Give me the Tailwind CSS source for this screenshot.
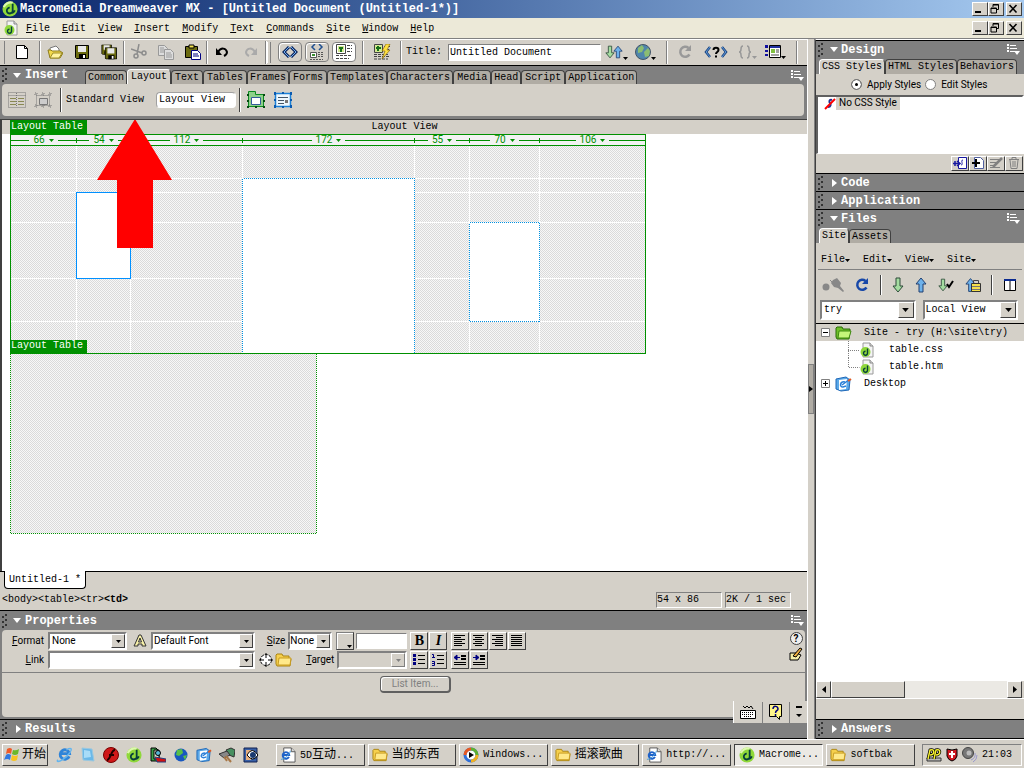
<!DOCTYPE html>
<html lang="en">
<head>
  <meta charset="UTF-8" />
  <meta name="viewport" content="width=device-width, initial-scale=1" />
  <title>Macromedia Dreamweaver MX</title>
  <script src="https://cdn.jsdelivr.net/npm/@tailwindcss/browser@4"></script>
</head>
<body class="h-screen overflow-hidden flex flex-col bg-[#d4d0c8] text-black text-[10px] leading-3 font-['Liberation_Mono','Noto_Sans_CJK_SC',monospace]">

  <!-- shared icons -->
  <svg class="hidden">
    <defs>
      <symbol id="grip" viewBox="0 0 6 14"><path fill="#333" d="M3 0h2v2H3zM0 2h2v2H0zM3 5h2v2H3zM0 7h2v2H0zM3 10h2v2H3zM0 12h2v2H0z"/></symbol>
      <symbol id="down" viewBox="0 0 8 5"><path fill="#fff" d="M0 0h8L4 5z"/></symbol>
      <symbol id="right" viewBox="0 0 5 8"><path fill="#fff" d="M0 0v8l5-4z"/></symbol>
      <symbol id="opts" viewBox="0 0 13 11"><path fill="#fff" d="M0 0h2v2H0zM0 3h2v2H0zM0 6h2v2H0zM3 1h6v1H3zM3 4h7v1H3zM3 7h5v1H3zM7 7h6l-3 4z"/></symbol>
      <symbol id="tri" viewBox="0 0 5 3"><path fill="currentColor" d="M0 0h5L2.500 3z"/></symbol>
      <symbol id="dw" viewBox="0 0 18 18"><circle cx="9" cy="9" r="8.500" fill="#8fd83a"/><path d="M2 7a8 8 0 0 1 10-5" stroke="#dcf8ae" stroke-width="2.500" fill="none"/><path d="M12 3v7.500a3.300 3.300 0 1 1-3.300-3M8.500 13.500c3 .5 5-1 6-3" stroke="#063f3b" stroke-width="2" fill="none"/></symbol>
      <symbol id="dwfile" viewBox="0 0 14 16"><path d="M3 1h7l3 3v11H3z" fill="#f4f4f4" stroke="#9a9a9a"/><path d="M10 1v3h3" fill="#ddd" stroke="#888"/><circle cx="5.500" cy="10" r="5" fill="#8fd83a"/><path d="M7.500 6.500v4.500a2 2 0 1 1-2-1.800" stroke="#063f3b" stroke-width="1.400" fill="none"/></symbol>
      <symbol id="folder" viewBox="0 0 17 14"><path d="M1 2l1-1h5l1 2h6v3h2l-1 7H2L1 11z" fill="#f6d04d" stroke="#a98312"/><path d="M3 12l1-7h12l-1 7z" fill="#ffe98a" stroke="#c89b20"/></symbol>
      <symbol id="gfolder" viewBox="0 0 17 14"><path d="M1 2l1-1h5l1 2h7v3l-1 7H2L1 11z" fill="#6fc02a" stroke="#2b6b08"/><path d="M3 12l1-7h12l-2 7z" fill="#c4f57a" stroke="#3f8a10"/></symbol>
      <symbol id="ie" viewBox="0 0 18 18"><path d="M14 11a5 5 0 1 1 .3-3H5.500" fill="none" stroke="#2f84d8" stroke-width="3"/><path d="M2 14.500C0 17 3 17 7 14.500 12 11 17 5 16 3c-1-1-3 0-5 1" fill="none" stroke="#64b5ee" stroke-width="1.500"/></symbol>
      <symbol id="iefile" viewBox="0 0 17 17"><path d="M4 1h8l4 4v11H4z" fill="#fff" stroke="#555"/><path d="M12 1v4h4" fill="#ddd" stroke="#555"/><path d="M9.500 10.500a3.500 3.500 0 1 1 .3-2H3.500" fill="none" stroke="#1f62c8" stroke-width="2"/><path d="M1 13c2 1 10-5 10-9" fill="none" stroke="#3e9be0"/></symbol>
      <symbol id="desk" viewBox="0 0 17 16"><path d="M1 3l10-2 4 3-1 10-8 1-5-2z" fill="#5aa8e8" stroke="#1f68b8"/><path d="M4 4l8-1-1 10-7 1z" fill="#fff"/><path d="M10 6c-5-1-6 5-2 5l3-1M7 9l8-6" fill="none" stroke="#2a7fd8" stroke-width="1.500"/><path d="M13 5l3-2" stroke="#e05820" stroke-width="2"/></symbol>
      <symbol id="adown" viewBox="0 0 12 16"><path d="M4 1h4v8h3l-5 6-5-6h3z" fill="#a4dca0" stroke="#2c4a38"/></symbol>
      <symbol id="aup" viewBox="0 0 12 16"><path d="M4 15h4V7h3L6 1 1 7h3z" fill="#6db1ea" stroke="#203f70"/></symbol>
      <symbol id="refresh" viewBox="0 0 14 14"><path d="M11.500 9.500A5 5 0 1 1 10.500 3" fill="none" stroke="currentColor" stroke-width="2.500"/><path d="M13 0v6H7z" fill="currentColor"/></symbol>
      <symbol id="min" viewBox="0 0 12 10"><path fill="#000" d="M2 7h6v2H2z"/></symbol>
      <symbol id="rest" viewBox="0 0 12 10"><path d="M4 3V.500h5.500v5H8M4 1h5.500M2 4h5.500v5H2zM2 4.500h5.500" fill="none" stroke="#000"/></symbol>
      <symbol id="close" viewBox="0 0 12 10"><path d="M2.500 1l7 7.500M9.500 1l-7 7.500" stroke="#000" stroke-width="1.600"/></symbol>
      <symbol id="floppy" viewBox="0 0 14 14"><path d="M.500.500h13v13h-12l-1-1z" fill="#6b6b10" stroke="#000"/><path d="M3 1h8v6H3z" fill="#e8e8e8"/><path d="M4 9h7v5H4z" fill="#000"/><path d="M8 10h2v3H8z" fill="#fff"/></symbol>
    </defs>
  </svg>

  <!-- title bar -->
  <header class="shrink-0 h-[18px] flex items-center pl-0.5 pr-0.5 bg-linear-to-r from-[#0a246a] to-[#a6caf0] text-white">
    <svg class="size-4"><use href="#dw"/></svg>
    <h1 class="flex-1 pl-0.5 text-xs font-bold whitespace-nowrap">Macromedia Dreamweaver MX - [Untitled Document (Untitled-1*)]</h1>
    <button aria-label="Minimize" class="w-4 h-3.5 bg-[#d4d0c8] border border-white border-r-[#404040] border-b-[#404040]"><svg class="w-3 h-2.5"><use href="#min"/></svg></button>
    <button aria-label="Restore" class="w-4 h-3.5 bg-[#d4d0c8] border border-white border-r-[#404040] border-b-[#404040]"><svg class="w-3 h-2.5"><use href="#rest"/></svg></button>
    <button aria-label="Close" class="ml-0.5 w-4 h-3.5 bg-[#d4d0c8] border border-white border-r-[#404040] border-b-[#404040]"><svg class="w-3 h-2.5"><use href="#close"/></svg></button>
  </header>

  <!-- menu bar -->
  <nav class="shrink-0 h-[21px] flex items-center pl-1 pr-0.5 bg-[#ece9d8] border-b border-[#808080]">
    <svg class="w-3.5 h-4"><use href="#dwfile"/></svg>
    <div class="flex-1 flex gap-3 pl-2 pt-px">
      <a href="#"><u>F</u>ile</a><a href="#"><u>E</u>dit</a><a href="#"><u>V</u>iew</a><a href="#"><u>I</u>nsert</a><a href="#"><u>M</u>odify</a><a href="#"><u>T</u>ext</a><a href="#"><u>C</u>ommands</a><a href="#"><u>S</u>ite</a><a href="#"><u>W</u>indow</a><a href="#"><u>H</u>elp</a>
    </div>
    <button aria-label="Minimize document" class="w-4 h-3.5 bg-[#d4d0c8] border border-white border-r-[#404040] border-b-[#404040]"><svg class="w-3 h-2.5"><use href="#min"/></svg></button>
    <button aria-label="Restore document" class="w-4 h-3.5 bg-[#d4d0c8] border border-white border-r-[#404040] border-b-[#404040]"><svg class="w-3 h-2.5"><use href="#rest"/></svg></button>
    <button aria-label="Close document" class="ml-0.5 w-4 h-3.5 bg-[#d4d0c8] border border-white border-r-[#404040] border-b-[#404040]"><svg class="w-3 h-2.5"><use href="#close"/></svg></button>
  </nav>

  <main class="flex-1 min-h-0 flex">
    <!-- left side -->
    <div class="flex-1 min-w-0 flex flex-col">

      <!-- document toolbar -->
      <div class="shrink-0 h-[27px] flex items-center pb-px border-t border-white border-b border-b-black">
        <span class="h-[23px] w-1 ml-px border-r border-[#808080]"></span>
        <button aria-label="New" class="w-[34px] flex justify-center"><svg class="w-3 h-3.5" viewBox="0 0 12 14"><path d="M.500.500h8l3 3v10H.500z" fill="#fff" stroke="#000"/><path d="M8.500.500v3h3" fill="none" stroke="#000"/></svg></button>
        <span class="h-[23px] w-0.5 border-l border-[#808080] border-r border-r-white"></span>
        <div class="w-[82px] flex justify-around">
          <button aria-label="Open"><svg class="w-4 h-3.5" viewBox="0 0 16 14"><path d="M3 3l6-2 3 3v4H3z" fill="#fff" stroke="#777"/><path d="M1 5h3l1 1h8l3 2-3 5H3z" fill="#f3d94c" stroke="#8a7a1b"/><path d="M3 13l3-5h9l-3 5z" fill="#fff3a0" stroke="#9d8d28"/></svg></button>
          <button aria-label="Save"><svg class="size-3.5"><use href="#floppy"/></svg></button>
          <button aria-label="Save all"><svg class="size-4" viewBox="0 0 17 16"><use href="#floppy" width="12" height="11"/><use href="#floppy" x="4" y="3" width="13" height="13"/></svg></button>
        </div>
        <span class="h-[23px] w-0.5 border-l border-[#808080] border-r border-r-white"></span>
        <div class="w-[81px] flex justify-around">
          <button aria-label="Cut"><svg class="size-4" viewBox="0 0 16 16" fill="none" stroke="#8c8c8c" stroke-width="1.500"><path d="M0 5l11 4M8 0L6 10"/><circle cx="5" cy="12" r="2"/><circle cx="13" cy="9" r="2"/></svg></button>
          <button aria-label="Copy"><svg class="size-4" viewBox="0 0 16 16" fill="#ddd" stroke="#999"><path d="M.500 1.500h6l3 3v7h-9z"/><path d="M6.500 5.500h6l3 3v7h-9zM8 9h5M8 11h6M8 13h6M2 4h4M2 6h4M2 8h4"/></svg></button>
          <button aria-label="Paste"><svg class="size-4" viewBox="0 0 16 16"><path d="M.500 2.500h12v11H.500z" fill="#6b6b10" stroke="#000"/><path d="M4 1h5v3H4z" fill="#f3e34c" stroke="#000"/><path d="M6.500 6.500h6l3 3v6h-9z" fill="#fff" stroke="#000080"/><path d="M8 10h5M8 12h6" stroke="#000080"/></svg></button>
        </div>
        <span class="h-[23px] w-0.5 border-l border-[#808080] border-r border-r-white"></span>
        <div class="w-[57px] flex justify-around">
          <button aria-label="Undo"><svg class="w-3.5 h-3" viewBox="0 0 14 12"><path d="M3 6c3-5 8-4 9 0 0 2-1 3-3 4" fill="none" stroke="#000" stroke-width="2"/><path d="M1 2v7h6z"/></svg></button>
          <button aria-label="Redo"><svg class="w-3.5 h-3" viewBox="0 0 14 12"><path d="M11 6C8 1 3 2 2 6c0 2 1 3 3 4" fill="none" stroke="#aaa" stroke-width="2"/><path fill="#aaa" d="M13 2v7H7z"/></svg></button>
        </div>
        <span class="h-[23px] w-0.5 border-l border-[#808080] border-r border-r-white"></span>
        <span class="h-[21px] w-1 border-x border-l-white border-r-[#808080]"></span>
        <div class="flex gap-[3px] pl-[7px]">
          <button aria-label="Code view" class="w-6 h-5 flex items-center justify-center border border-[#808080] rounded-sm shadow-[inset_1px_1px_0_#fff]"><svg class="w-4 h-3" viewBox="0 0 16 12" fill="none"><path d="M7 1L2 6l5 5M9 1l5 5-5 5" stroke="#102a60" stroke-width="3"/><path d="M7 1L2 6l5 5M9 1l5 5-5 5" stroke="#72aef0"/></svg></button>
          <button aria-label="Split view" class="w-6 h-5 flex items-center justify-center border border-[#808080] rounded-sm shadow-[inset_1px_1px_0_#fff]"><svg class="w-4 h-4" viewBox="0 0 16 16" fill="none"><path d="M6 0L3 3l3 3M10 0l3 3-3 3" stroke="#205090" stroke-width="1.500"/><path d="M1.500 8.500h6v5h-6z" fill="#fff" stroke="#555"/><path d="M3 10h3v2H3z" fill="#3a9030"/><path d="M9 8.500h6M9 10.500h5M9 12.500h6M1 15.500h13" stroke="#555" stroke-dasharray="2 1"/></svg></button>
          <button aria-label="Design view" class="w-6 h-5 flex items-center justify-center bg-white border border-[#808080] rounded-sm"><svg class="w-[18px] h-4" viewBox="0 0 18 16" fill="none"><path d="M1.500.500h9v9h-9z" fill="#fff" stroke="#444"/><path d="M3 2h6v6H3z" fill="#d4ea90"/><path d="M6 3v5M4 4h4" stroke="#187018" stroke-width="2"/><path d="M12 1.500h5M12 4.500h5M12 7.500h5M1 11.500h16M1 14.500h13" stroke="#444" stroke-dasharray="3 1"/></svg></button>
        </div>
        <span class="h-[23px] w-0.5 ml-1.5 border-l border-[#808080] border-r border-r-white"></span>
        <button aria-label="Live data" class="w-9 flex justify-center"><svg class="w-[18px] h-4" viewBox="0 0 18 16" fill="none"><path d="M1.500.500h8v8h-8z" fill="#d4ea90" stroke="#444"/><path d="M5 2v5M3 4h5" stroke="#187018" stroke-width="2"/><path d="M11 2.500h6M11 5.500h5M1 10.500h14M1 12.500h16M1 15h14" stroke="#444" stroke-dasharray="3 1"/><path d="M17 0h-4l-4 7h3l-3 8 8-9h-3z" fill="#ffe040" stroke="#7a5a00" stroke-width=".6"/></svg></button>
        <span class="h-[23px] w-0.5 border-l border-[#808080] border-r border-r-white"></span>
        <label for="docTitle" class="pl-1 pr-1.5">Title:</label>
        <input id="docTitle" value="Untitled Document" class="w-[153px] h-[17px] px-px bg-white border border-[#808080] border-r-white border-b-white" />
        <button aria-label="File management" class="ml-1 flex items-end"><svg class="w-2.5 h-4"><use href="#adown"/></svg><svg class="w-2.5 h-4 -ml-0.5"><use href="#aup"/></svg><svg class="w-[5px] h-[3px]"><use href="#tri"/></svg></button>
        <button aria-label="Preview in browser" class="ml-[7px] flex items-end"><svg class="size-4" viewBox="0 0 16 16"><circle cx="8" cy="8" r="7.500" fill="#4f86ac" stroke="#456"/><path d="M3 4l4-3 2 3-2 4-4 1zM9 8l4-4 2 3-1 5-4 1z" fill="#8bbd72"/></svg><svg class="w-[5px] h-[3px]"><use href="#tri"/></svg></button>
        <span class="h-[23px] w-0.5 ml-2.5 border-l border-[#808080] border-r border-r-white"></span>
        <button aria-label="Refresh" class="ml-2.5 text-[#999]"><svg class="size-3.5"><use href="#refresh"/></svg></button>
        <button aria-label="Reference" class="ml-3"><svg class="w-6 h-3" viewBox="0 0 24 12" fill="none"><path d="M6 1L2 6l4 5M18 1l4 5-4 5" stroke="#17427e" stroke-width="2.500"/><path d="M6 1L2 6l4 5M18 1l4 5-4 5" stroke="#72aef0" stroke-width=".8"/><path d="M9.500 4c0-3 5-3 5 0 0 2-2.500 2-2.500 4M12 9.500v2" stroke="#000" stroke-width="2"/></svg></button>
        <button aria-label="Code navigation" class="ml-2.5 flex items-end text-[#999]"><svg class="w-3.5 h-3.5" viewBox="0 0 14 14" fill="none" stroke="#999" stroke-width="1.500"><path d="M5 1C1 1 5 7 1 7c4 0 0 6 4 6M9 1c4 0 0 6 4 6-4 0 0 6-4 6"/></svg><svg class="w-[5px] h-[3px]"><use href="#tri"/></svg></button>
        <button aria-label="View options" class="ml-2 flex items-end"><svg class="w-4 h-3.5" viewBox="0 0 16 14"><path d="M0 0h3v3H0zM0 5h3v2H0zM0 9h3v2H0z" fill="#1010a0"/><path d="M4.500.500h11v12h-11z" fill="#fff" stroke="#000"/><path d="M5 1h10v2H5z" fill="#2030a0"/><path d="M6 4h4v4H6z" fill="#80c040"/><path d="M11 5h3M11 7h3M6 10h8" stroke="#444"/></svg><svg class="w-[5px] h-[3px]"><use href="#tri"/></svg></button>
        <span class="h-[23px] w-0.5 ml-2.5 border-l border-[#808080] border-r border-r-white"></span>
      </div>

      <!-- insert panel -->
      <section class="shrink-0 bg-[#808080] pr-px pb-[3px]">
        <div class="h-[18px] flex items-end pl-0.5 pr-0.5">
          <svg class="w-1.5 h-3.5 self-center"><use href="#grip"/></svg>
          <svg class="w-2 h-[5px] ml-[5px] self-center"><use href="#down"/></svg>
          <h2 class="w-16 pl-1 self-center text-xs text-white font-bold">Insert</h2>
          <div class="flex-1 flex items-end">
            <button class="h-3.5 px-0.5 bg-[#b0aca4] border border-b-0 border-[#404040] rounded-t-sm">Common</button>
            <button class="h-[15px] px-[3px] bg-[#d4d0c8] border border-b-0 border-white border-r-[#404040] rounded-t-sm">Layout</button>
            <button class="h-3.5 px-[3px] bg-[#b0aca4] border border-b-0 border-[#404040] rounded-t-sm">Text</button>
            <button class="h-3.5 px-[3px] bg-[#b0aca4] border border-b-0 border-[#404040] rounded-t-sm">Tables</button>
            <button class="h-3.5 px-0.5 bg-[#b0aca4] border border-b-0 border-[#404040] rounded-t-sm">Frames</button>
            <button class="h-3.5 px-[3px] bg-[#b0aca4] border border-b-0 border-[#404040] rounded-t-sm">Forms</button>
            <button class="h-3.5 px-0.5 bg-[#b0aca4] border border-b-0 border-[#404040] rounded-t-sm">Templates</button>
            <button class="h-3.5 px-0.5 bg-[#b0aca4] border border-b-0 border-[#404040] rounded-t-sm">Characters</button>
            <button class="h-3.5 px-[3px] bg-[#b0aca4] border border-b-0 border-[#404040] rounded-t-sm">Media</button>
            <button class="h-3.5 px-0.5 bg-[#b0aca4] border border-b-0 border-[#404040] rounded-t-sm">Head</button>
            <button class="h-3.5 px-[3px] bg-[#b0aca4] border border-b-0 border-[#404040] rounded-t-sm">Script</button>
            <button class="h-3.5 px-0.5 bg-[#b0aca4] border border-b-0 border-[#404040] rounded-t-sm">Application</button>
          </div>
          <svg class="w-[13px] h-[11px] self-center"><use href="#opts"/></svg>
        </div>
        <div class="ml-0.5 mr-0.5 h-8 flex items-center rounded-sm bg-[#d4d0c8] pl-1.5">
          <button aria-label="Table"><svg class="size-[18px]" viewBox="0 0 18 18" fill="none" stroke="#777"><path d="M.500 1.500h17v15H.500zM.500 4.500h17" stroke-dasharray="1 1"/><path d="M2 7.500h6M10 7.500h6M2 10.500h6M10 10.500h6M2 13.500h6M10 13.500h6" stroke="#898954"/><path d="M8.500 2v14" stroke-dasharray="1 1"/></svg></button>
          <button aria-label="Draw layer" class="ml-2"><svg class="size-[18px]" viewBox="0 0 18 18" fill="none" stroke="#777"><path d="M2.500 4.500h13v10h-13z" stroke-dasharray="1 1"/><path d="M5.500 7.500h8v6h-8z" fill="#ccc"/><path d="M1 2h2v2H1zM8 2h2v2H8zM15 2h2v2h-2zM1 14h2v2H1zM15 14h2v2h-2zM8 14h2v2H8z" stroke-dasharray="1 1"/></svg></button>
          <span class="h-6 w-0.5 ml-2 border-l border-[#404040] border-r border-r-white"></span>
          <button class="ml-1">Standard View</button>
          <button class="ml-3 w-20 h-4 bg-white rounded-sm border border-[#a0a0a0] border-r-white border-b-white text-left pl-0.5 leading-3">Layout View</button>
          <span class="h-6 w-0.5 ml-[3px] border-l border-[#404040] border-r border-r-white"></span>
          <button aria-label="Draw layout table" class="ml-1.5"><svg class="size-[18px]" viewBox="0 0 18 18" fill="none"><path d="M1.500 3.500V.500h7v3h8v12h-15z" fill="#8fd08a" stroke="#0a8a20"/><path d="M4.500 6.500h9v7h-9z" fill="#fff" stroke="#335a9a"/><path d="M0 3h2v2H0zM16 3h2v2h-2zM0 9h2v2H0zM16 9h2v2h-2zM0 15h2v2H0zM8 15h2v2H8zM16 15h2v2h-2z" fill="#044a10"/></svg></button>
          <button aria-label="Draw layout cell" class="ml-[9px]"><svg class="size-[18px]" viewBox="0 0 18 18" fill="none"><path d="M1.500 2.500h15v13h-15z" fill="#eef7fd" stroke="#1a80d8" stroke-width="1.500"/><path d="M4 6.500h10M4 9.500h6M4 12.500h6" stroke="#456"/><path d="M11 9h3v3h-3z" fill="#777"/><path d="M0 1h2v3H0zM8 1h2v2H8zM16 1h2v3h-2zM0 14h2v3H0zM8 15h2v2H8zM16 14h2v3h-2zM0 8h2v2H0zM16 8h2v2h-2z" fill="#0a5ab0"/></svg></button>
        </div>
      </section>

      <!-- document window -->
      <section class="flex-1 min-h-0 bg-white border-l-2 border-t border-[#404040] relative overflow-hidden">
        <div class="h-3.5 pt-px bg-[#d4d0c8] text-center">Layout View</div>
        <div class="absolute left-2 top-0 w-[636px]">
          <span class="block w-[77px] h-3.5 pl-px pt-px bg-[#009000] text-white">Layout Table</span>
          <div class="h-3 flex border border-[#009000] bg-[#f2f2f2] text-[#009000] font-[Roboto,sans-serif] leading-[10px]">
            <div class="w-[66px] flex items-center gap-1"><i class="flex-1 h-px bg-[#009000]"></i>66<svg class="w-[5px] h-[3px]"><use href="#tri"/></svg><i class="flex-1 h-px bg-[#009000]"></i><i class="-ml-1 w-px h-[5px] bg-[#009000]"></i></div>
            <div class="w-[54px] flex items-center gap-1"><i class="flex-1 h-px bg-[#009000]"></i>54<svg class="w-[5px] h-[3px]"><use href="#tri"/></svg><i class="flex-1 h-px bg-[#009000]"></i><i class="-ml-1 w-px h-[5px] bg-[#009000]"></i></div>
            <div class="w-28 flex items-center gap-1"><i class="flex-1 h-px bg-[#009000]"></i>112<svg class="w-[5px] h-[3px]"><use href="#tri"/></svg><i class="flex-1 h-px bg-[#009000]"></i><i class="-ml-1 w-px h-[5px] bg-[#009000]"></i></div>
            <div class="w-[172px] flex items-center gap-1"><i class="flex-1 h-px bg-[#009000]"></i>172<svg class="w-[5px] h-[3px]"><use href="#tri"/></svg><i class="flex-1 h-px bg-[#009000]"></i><i class="-ml-1 w-px h-[5px] bg-[#009000]"></i></div>
            <div class="w-[55px] flex items-center gap-1"><i class="flex-1 h-px bg-[#009000]"></i>55<svg class="w-[5px] h-[3px]"><use href="#tri"/></svg><i class="flex-1 h-px bg-[#009000]"></i><i class="-ml-1 w-px h-[5px] bg-[#009000]"></i></div>
            <div class="w-[70px] flex items-center gap-1"><i class="flex-1 h-px bg-[#009000]"></i>70<svg class="w-[5px] h-[3px]"><use href="#tri"/></svg><i class="flex-1 h-px bg-[#009000]"></i><i class="-ml-1 w-px h-[5px] bg-[#009000]"></i></div>
            <div class="flex-1 flex items-center gap-1"><i class="flex-1 h-px bg-[#009000]"></i>106<svg class="w-[5px] h-[3px]"><use href="#tri"/></svg><i class="flex-1 h-px bg-[#009000]"></i></div>
          </div>
          <!-- layout cells -->
          <svg class="block w-[636px] h-[389px]" viewBox="0 0 636 389" fill="none" shape-rendering="crispEdges">
            <defs>
              <pattern id="check" width="2" height="2" patternUnits="userSpaceOnUse"><path fill="#f7f7f7" d="M0 0h2v2H0z"/><path fill="#dadada" d="M0 0h1v1H0zM1 1h1v1H1z"/></pattern>
            </defs>
            <path d="M0 0h636v208H0zM0 208h307v180H0z" fill="url(#check)"/>
            <path d="M0 32.500h636M0 46.500h636M0 76.500h636M0 132.500h636M0 175.500h636M66.500 0v208M120.500 0v208M232.500 0v208M404.500 0v208M459.500 0v208M529.500 0v208" stroke="#fff"/>
            <path d="M66.500 46.500h54v86h-54z" fill="#fff" stroke="#0090ff"/>
            <path d="M232.500 207.500v-175h172v175" fill="#fff" stroke="#0090e0" stroke-dasharray="1 1"/>
            <path d="M459.500 76.500h70v99h-70z" fill="#fff" stroke="#0090e0" stroke-dasharray="1 1"/>
            <path d="M.500 208v179.500h306V208" stroke="#009000" stroke-dasharray="1 1"/>
            <path d="M.500 0v207.500h635V0" stroke="#009000"/>
          </svg>
        </div>
        <span class="absolute left-2 top-[220px] w-[77px] h-[13px] pl-px bg-[#009000] text-white">Layout Table</span>
        <svg class="absolute left-[95px] top-0 w-[76px] h-[130px]" viewBox="0 0 76 130"><path d="M38-1l37 61H56v68H20V60H0z" fill="#f00"/></svg>
      </section>

      <!-- document tab and tag selector -->
      <div class="shrink-0 h-[19px] flex">
        <span class="w-1 border-t border-black"></span>
        <button class="w-[82px] h-[18px] bg-white border border-t-0 border-black rounded-b-sm text-left pl-1">Untitled-1 *</button>
        <span class="flex-1 border-t border-black"></span>
      </div>
      <div class="shrink-0 h-[21px] flex items-center pl-0.5 border-b border-black">
        <a href="#">&lt;body&gt;</a><a href="#">&lt;table&gt;</a><a href="#">&lt;tr&gt;</a><a href="#" class="font-bold">&lt;td&gt;</a>
        <span class="flex-1"></span>
        <span class="w-[66px] h-4 border border-[#808080] border-r-white border-b-white leading-3.5">54 x 86</span>
        <span class="w-[66px] h-4 ml-[3px] mr-4 border border-[#808080] border-r-white border-b-white leading-3.5">2K / 1 sec</span>
      </div>

      <!-- properties panel -->
      <section class="shrink-0 bg-[#808080] relative pb-0.5">
        <div class="h-[19px] flex items-center pl-0.5 pr-[3px]">
          <svg class="w-1.5 h-3.5"><use href="#grip"/></svg>
          <svg class="w-2 h-[5px] ml-[5px]"><use href="#down"/></svg>
          <h2 class="flex-1 pl-1 text-xs text-white font-bold">Properties</h2>
          <svg class="w-[13px] h-[11px]"><use href="#opts"/></svg>
        </div>
        <div class="ml-0.5 mr-0.5 bg-[#d4d0c8] rounded-sm font-[Roboto,sans-serif]">
          <div class="h-[43px] pt-0.5 flex border-b border-[#808080]">
            <div class="flex flex-col gap-px">
              <div class="flex items-center h-[18px]">
                <label for="fmt" class="w-[42px] text-right"><u>F</u>ormat</label>
                <span class="relative ml-1"><select id="fmt" class="block appearance-none w-[79px] h-[18px] pl-0.5 bg-white border-2 border-[#808080] border-r-white border-b-white leading-3"><option>None</option></select><i class="pointer-events-none absolute right-0.5 top-0.5 w-3.5 h-3.5 bg-[#d4d0c8] border border-white border-r-[#404040] border-b-[#404040] flex items-center justify-center"><svg class="w-[5px] h-[3px]"><use href="#tri"/></svg></i></span>
                <svg class="w-3.5 h-3.5 ml-1.5" viewBox="0 0 14 14"><path d="M1 12h4v-2h4v2h4L8 1H6L2 10z" fill="#f7f0a8" stroke="#333"/><path d="M5.500 8h3L7 4z" fill="#d4d0c8" stroke="#333"/></svg>
                <span class="relative ml-1"><select aria-label="Font" class="block appearance-none w-[104px] h-[18px] pl-px bg-white border-2 border-[#808080] border-r-white border-b-white leading-3"><option>Default Font</option></select><i class="pointer-events-none absolute right-0.5 top-0.5 w-3.5 h-3.5 bg-[#d4d0c8] border border-white border-r-[#404040] border-b-[#404040] flex items-center justify-center"><svg class="w-[5px] h-[3px]"><use href="#tri"/></svg></i></span>
              </div>
              <div class="flex items-center h-[18px]">
                <label for="lnk" class="w-[42px] text-right"><u>L</u>ink</label>
                <span class="relative ml-1"><input id="lnk" class="block w-[207px] h-[18px] bg-white border-2 border-[#808080] border-r-white border-b-white" /><button aria-label="Recent links" class="absolute right-0.5 top-0.5 w-3.5 h-3.5 bg-[#d4d0c8] border border-white border-r-[#404040] border-b-[#404040] flex items-center justify-center"><svg class="w-[5px] h-[3px]"><use href="#tri"/></svg></button></span>
              </div>
            </div>
            <div class="flex flex-col gap-px pl-1">
              <div class="flex items-center justify-end h-[18px]">
                <label for="sz"><u>S</u>ize</label>
                <span class="relative ml-[3px]"><select id="sz" class="block appearance-none w-11 h-[18px] bg-white border-2 border-[#808080] border-r-white border-b-white leading-3"><option>None</option></select><i class="pointer-events-none absolute right-0.5 top-0.5 w-3.5 h-3.5 bg-[#d4d0c8] border border-white border-r-[#404040] border-b-[#404040] flex items-center justify-center"><svg class="w-[5px] h-[3px]"><use href="#tri"/></svg></i></span>
                <button aria-label="Text color" class="ml-1 w-[18px] h-[18px] flex items-end justify-end border border-[#808080] border-r-[#404040] border-b-[#404040] shadow-[inset_1px_1px_0_#fff] p-px"><svg class="w-[5px] h-[3px]"><use href="#tri"/></svg></button>
                <input aria-label="Color value" class="w-[51px] h-4 ml-0.5 bg-white border border-[#808080] border-r-white border-b-white" />
              </div>
              <div class="flex items-center h-[18px]">
                <button aria-label="Point to file"><svg class="size-3.5" viewBox="0 0 14 14" fill="none" stroke="#000"><circle cx="7" cy="7" r="5.500" fill="#fff" stroke-dasharray="3 1"/><path d="M7 0v5M7 9v5M0 7h5M9 7h5"/></svg></button>
                <button aria-label="Browse" class="ml-0.5"><svg class="w-[17px] h-3.5"><use href="#folder"/></svg></button>
                <label for="tgt" class="ml-3.5"><u>T</u>arget</label>
                <span class="relative ml-[3px]"><select id="tgt" disabled class="block appearance-none w-[70px] h-[18px] bg-[#d4d0c8] border-2 border-[#808080] border-r-white border-b-white"><option></option></select><i class="pointer-events-none absolute right-0.5 top-0.5 w-3.5 h-3.5 bg-[#d4d0c8] border border-white border-r-[#808080] border-b-[#808080] flex items-center justify-center text-[#808080]"><svg class="w-[5px] h-[3px]"><use href="#tri"/></svg></i></span>
              </div>
            </div>
            <div class="flex flex-col gap-px pl-[3px]">
              <div class="flex gap-px">
                <button class="w-[18px] h-[18px] border border-white border-r-[#404040] border-b-[#404040] font-['Liberation_Serif',serif] font-bold text-sm leading-3.5">B</button>
                <button class="w-[18px] h-[18px] border border-white border-r-[#404040] border-b-[#404040] font-['Liberation_Serif',serif] font-bold italic text-sm leading-3.5">I</button>
                <button aria-label="Align left" class="ml-[3px] w-[18px] h-[18px] border border-white border-r-[#404040] border-b-[#404040]"><svg class="size-4" viewBox="0 0 16 16" stroke="#000"><path d="M2 2.500h11M2 4.500h7M2 6.500h11M2 8.500h8M2 10.500h11M2 12.500h8"/></svg></button>
                <button aria-label="Align center" class="w-[18px] h-[18px] border border-white border-r-[#404040] border-b-[#404040]"><svg class="size-4" viewBox="0 0 16 16" stroke="#000"><path d="M2 2.500h11M4 4.500h7M2 6.500h11M4 8.500h7M2 10.500h11M4 12.500h7"/></svg></button>
                <button aria-label="Align right" class="w-[18px] h-[18px] border border-white border-r-[#404040] border-b-[#404040]"><svg class="size-4" viewBox="0 0 16 16" stroke="#000"><path d="M2 2.500h11M6 4.500h7M2 6.500h11M5 8.500h8M2 10.500h11M5 12.500h8"/></svg></button>
                <button aria-label="Justify" class="w-[18px] h-[18px] border border-white border-r-[#404040] border-b-[#404040]"><svg class="size-4" viewBox="0 0 16 16" stroke="#000"><path d="M2 2.500h11M2 4.500h11M2 6.500h11M2 8.500h11M2 10.500h11M2 12.500h11"/></svg></button>
              </div>
              <div class="flex gap-px">
                <button aria-label="Unordered list" class="w-[18px] h-[18px] border border-white border-r-[#404040] border-b-[#404040]"><svg class="size-4" viewBox="0 0 16 16" stroke="#000"><path d="M7 3.500h7M7 7.500h7M7 11.500h7"/><path d="M2 3.500h3M2 7.500h3M2 11.500h3" stroke="#000080" stroke-width="3"/></svg></button>
                <button aria-label="Ordered list" class="w-[18px] h-[18px] border border-white border-r-[#404040] border-b-[#404040]"><svg class="size-4" viewBox="0 0 16 16" stroke="#000" fill="none"><path d="M7 3.500h7M7 7.500h7M7 11.500h7"/><path d="M2 2.500h1.500v3M2 5.500h3M2 9.500h2.500v4H2M2 11.500h2" stroke="#000080"/></svg></button>
                <button aria-label="Outdent" class="ml-[3px] w-[18px] h-[18px] border border-white border-r-[#404040] border-b-[#404040]"><svg class="size-4" viewBox="0 0 16 16" stroke="#000"><path d="M9 4h5M9 7h5" stroke-width="2"/><path d="M2 10.500h12M2 12.500h12"/><path d="M8 5.500H4M5 3L2 5.500 5 8z" stroke="#000080" fill="#000080"/></svg></button>
                <button aria-label="Indent" class="w-[18px] h-[18px] border border-white border-r-[#404040] border-b-[#404040]"><svg class="size-4" viewBox="0 0 16 16" stroke="#000"><path d="M9 4h5M9 7h5" stroke-width="2"/><path d="M2 10.500h12M2 12.500h12"/><path d="M2 5.500h4M5 3l3 2.500L5 8z" stroke="#000080" fill="#000080"/></svg></button>
              </div>
            </div>
            <div class="ml-auto flex flex-col items-center gap-0.5 pr-0.5">
              <button aria-label="Help" class="size-[13px] rounded-full border border-[#404040] bg-[#eee] font-bold leading-[11px]">?</button>
              <button aria-label="Quick tag editor"><svg class="size-3.5" viewBox="0 0 14 14"><path d="M1 6h6l5 2-3 5H1z" fill="#f7f0a8" stroke="#000"/><path d="M4 9l7-8 2 1-6 8z" fill="#f0b040" stroke="#000"/></svg></button>
            </div>
          </div>
          <div class="h-11 flex justify-center pt-[3px] pl-6">
            <button class="w-[71px] h-[17px] border border-[#606060] border-r-2 border-b-2 rounded-sm text-[#808080] leading-3 shadow-[inset_1px_1px_0_#fff]">List Item...</button>
          </div>
        </div>
        <!-- floating shortcut bar -->
        <div class="absolute right-0 -bottom-1 h-[22px] flex items-center bg-[#d4d0c8] border-l border-white">
          <button aria-label="Keyboard" class="w-[29px] h-[21px] flex items-center justify-center border-r border-[#808080]"><svg class="w-4 h-3.5" viewBox="0 0 16 14"><path d="M3 1l2 2 2-2 2 2 2-2 2 3" fill="none" stroke="#000"/><path d="M.500 5.500h15v8H.500z" fill="#fff" stroke="#000"/><path d="M2 7.500h12M2 9.500h12M4 11.500h8" stroke="#000" stroke-dasharray="1 1"/></svg></button>
          <button aria-label="Help topics" class="w-[27px] h-[21px] flex items-center justify-center border-r border-[#808080]"><svg class="w-3.5 h-4" viewBox="0 0 14 16"><path d="M.500.500h12v12h-2v3l-3-3h-7z" fill="#fff68a" stroke="#000"/><path d="M4 5c0-4 5-3 5 0 0 2-2.500 1-2.500 4M6.500 10v2" fill="none" stroke="#000080" stroke-width="1.500"/></svg></button>
          <button aria-label="More" class="w-[17px] flex justify-center"><svg class="w-1.5 h-3" viewBox="0 0 6 12"><path d="M0 0h6v2H0zM0 8h6l-3 3z"/></svg></button>
        </div>
      </section>

      <!-- results panel -->
      <section class="shrink-0 h-5 flex items-center pl-0.5 bg-[#808080] border-y border-black">
        <svg class="w-1.5 h-3.5"><use href="#grip"/></svg>
        <svg class="w-[5px] h-2 ml-2"><use href="#right"/></svg>
        <h2 class="pl-1 text-xs text-white font-bold">Results</h2>
      </section>
    </div>

    <!-- splitter -->
    <div class="shrink-0 w-2 flex flex-col justify-center border-l border-white border-r border-r-[#808080]">
      <button aria-label="Collapse panels" class="h-[50px] w-full flex items-center justify-center bg-[#b0aca4] border border-[#808080]"><svg class="w-1 h-1.5" viewBox="0 0 4 6"><path d="M0 0v6l4-3z"/></svg></button>
    </div>

    <!-- right side -->
    <aside class="shrink-0 w-[209px] flex flex-col border-t border-white border-l border-l-[#404040]">
      <section class="shrink-0">
        <div class="h-[18px] flex items-center pl-0.5 pr-1 bg-[#808080] border-t border-black">
          <svg class="w-1.5 h-3.5"><use href="#grip"/></svg>
          <svg class="w-2 h-[5px] ml-1.5"><use href="#down"/></svg>
          <h2 class="flex-1 pl-[3px] text-xs text-white font-bold">Design</h2>
          <svg class="w-[13px] h-[11px]"><use href="#opts"/></svg>
        </div>
        <div class="h-4 flex items-end pl-[3px] bg-[#808080]">
          <button class="h-[15px] px-0.5 bg-[#d4d0c8] border border-b-0 border-white border-r-[#404040] rounded-t-sm whitespace-nowrap">CSS Styles</button>
          <button class="h-[15px] px-0.5 bg-[#b0aca4] border border-b-0 border-[#404040] rounded-t-sm whitespace-nowrap">HTML Styles</button>
          <button class="h-[15px] px-0.5 bg-[#b0aca4] border border-b-0 border-[#404040] rounded-t-sm">Behaviors</button>
        </div>
        <div class="h-[21px] flex items-center pl-[35px] font-[Roboto,sans-serif] whitespace-nowrap">
          <input type="radio" id="apply" name="mode" checked class="appearance-none size-[11px] rounded-full bg-white border border-[#808080] checked:bg-black checked:shadow-[inset_0_0_0_3px_#fff]" />
          <label for="apply" class="pl-[5px]">Apply Styles</label>
          <input type="radio" id="edit" name="mode" class="appearance-none ml-1 size-[11px] rounded-full bg-white border border-[#808080]" />
          <label for="edit" class="pl-[5px]">Edit Styles</label>
        </div>
        <div class="h-[59px] flex items-start bg-white border-2 border-b border-[#606060] border-r-white border-b-white pl-1.5 font-[Roboto,sans-serif]">
          <svg class="size-3 mt-px" viewBox="0 0 12 12"><path d="M8 2c-3-1-3 2-2 3s1 4-2 4" fill="none" stroke="#203090" stroke-width="2"/><path d="M1 11L11 1" stroke="#f00" stroke-width="2"/></svg>
          <span class="w-16 h-[13px] pl-[3px] bg-[#d4d0c8]">No CSS Style</span>
        </div>
        <div class="h-[18px] flex items-center justify-end pr-px">
          <button aria-label="Attach style sheet" class="w-[18px] h-[15px] flex items-center justify-center border border-white border-r-[#404040] border-b-[#404040]"><svg class="w-3.5 h-3" viewBox="0 0 14 12" fill="none" stroke="#1818a0"><path d="M5.500.500h8v11h-8z" fill="#fff"/><path d="M10 3c-3 0 1 5-2 5"/><path d="M0 6.500h7M4 4l3 2.500L4 9M2 4v5" stroke-width="1.500"/></svg></button>
          <button aria-label="New style" class="w-[18px] h-[15px] flex items-center justify-center border border-white border-r-[#404040] border-b-[#404040]"><svg class="w-3.5 h-3" viewBox="0 0 14 12"><path d="M3.500.500h6l3 3v8h-9z" fill="#fff" stroke="#5060a0"/><path d="M1 6h8M5 2v8" stroke="#000" stroke-width="2"/></svg></button>
          <button aria-label="Edit style" class="w-[18px] h-[15px] flex items-center justify-center border border-white border-r-[#404040] border-b-[#404040]"><svg class="w-3.5 h-3" viewBox="0 0 14 12" stroke="#808080"><path d="M1 2.500h10M1 5.500h7M1 8.500h5M1 10.500h10"/><path d="M4 10l9-9" stroke-width="2.500"/></svg></button>
          <button aria-label="Delete style" class="w-[18px] h-[15px] flex items-center justify-center border border-white border-r-[#404040] border-b-[#404040]"><svg class="w-3 h-3" viewBox="0 0 12 12" fill="none" stroke="#808080"><path d="M1 2.500h10M4 2V.500h4V2M2 3l1 8.500h6L10 3M5 4v6M7 4v6"/></svg></button>
        </div>
      </section>

      <section class="shrink-0 h-[18px] mt-px flex items-center pl-0.5 bg-[#808080] border-t border-black">
        <svg class="w-1.5 h-3.5"><use href="#grip"/></svg><svg class="w-[5px] h-2 ml-2"><use href="#right"/></svg>
        <h2 class="pl-1 text-xs text-white font-bold">Code</h2>
      </section>
      <section class="shrink-0 h-[18px] flex items-center pl-0.5 bg-[#808080] border-t border-black">
        <svg class="w-1.5 h-3.5"><use href="#grip"/></svg><svg class="w-[5px] h-2 ml-2"><use href="#right"/></svg>
        <h2 class="pl-1 text-xs text-white font-bold">Application</h2>
      </section>

      <section class="flex-1 min-h-0 flex flex-col border-t border-black">
        <div class="shrink-0 h-[17px] flex items-center pl-0.5 pr-1 bg-[#808080]">
          <svg class="w-1.5 h-3.5"><use href="#grip"/></svg>
          <svg class="w-2 h-[5px] ml-1.5"><use href="#down"/></svg>
          <h2 class="flex-1 pl-[3px] text-xs text-white font-bold">Files</h2>
          <svg class="w-[13px] h-[11px]"><use href="#opts"/></svg>
        </div>
        <div class="shrink-0 h-4 flex items-end pl-[3px] bg-[#808080]">
          <button class="h-[15px] px-0.5 bg-[#d4d0c8] border border-b-0 border-white border-r-[#404040] rounded-t-sm">Site</button>
          <button class="h-3.5 px-0.5 bg-[#b0aca4] border border-b-0 border-[#404040] rounded-t-sm">Assets</button>
        </div>
        <div class="shrink-0 h-[27px] mx-0.5 pl-[3px] pt-2 flex items-center gap-[13px] border-b border-[#808080]">
          <button class="flex items-center">File<svg class="w-[5px] h-[3px]"><use href="#tri"/></svg></button>
          <button class="flex items-center">Edit<svg class="w-[5px] h-[3px]"><use href="#tri"/></svg></button>
          <button class="flex items-center">View<svg class="w-[5px] h-[3px]"><use href="#tri"/></svg></button>
          <button class="flex items-center">Site<svg class="w-[5px] h-[3px]"><use href="#tri"/></svg></button>
        </div>
        <div class="shrink-0 h-[30px] flex items-center pl-1.5 pr-2 justify-between">
          <button aria-label="Connect"><svg class="w-[22px] h-4" viewBox="0 0 22 16" fill="#888"><circle cx="4" cy="10" r="3.500"/><path d="M8 3l3 3" stroke="#888"/><path d="M11 3l4-2 4 5-1 3 4 5-1 1-5-4-4-1-3-4z"/></svg></button>
          <button aria-label="Refresh files" class="text-[#1848a8]"><svg class="size-3.5"><use href="#refresh"/></svg></button>
          <span class="h-5 w-0.5 border-l border-[#404040] border-r border-r-white"></span>
          <button aria-label="Get files"><svg class="w-3 h-4"><use href="#adown"/></svg></button>
          <button aria-label="Put files"><svg class="w-3 h-4"><use href="#aup"/></svg></button>
          <button aria-label="Check out" class="flex"><svg class="w-2.5 h-4"><use href="#adown"/></svg><svg class="w-2 h-3.5 -ml-0.5" viewBox="0 0 8 14"><path d="M1 7l2 3 4-6" fill="none" stroke="#000" stroke-width="2"/></svg></button>
          <button aria-label="Check in"><svg class="size-4" viewBox="0 0 16 16"><use href="#aup" width="11" height="16"/><path d="M8.500 6V3.500h5V6" fill="none" stroke="#444"/><path d="M6.500 6.500h9v8h-9z" fill="#f5e04a" stroke="#333"/><path d="M7 9.500h8M7 12.500h8" stroke="#777"/></svg></button>
          <span class="h-5 w-0.5 border-l border-[#404040] border-r border-r-white"></span>
          <button aria-label="Expand"><svg class="w-3 h-3" viewBox="0 0 12 12"><path d="M.500.500h11v11H.500zM6 1v11" fill="#fff" stroke="#000"/><path d="M0 0h12v2H0z" fill="#0a2a90"/></svg></button>
        </div>
        <div class="shrink-0 h-[23px] flex gap-[7px] pl-1 pr-1.5">
          <span class="relative flex-1"><select aria-label="Site" class="block appearance-none w-full h-5 pl-0.5 bg-white border-2 border-[#808080] border-r-white border-b-white leading-3"><option>try</option></select><i class="pointer-events-none absolute right-0.5 top-0.5 size-4 bg-[#d4d0c8] border border-white border-r-[#404040] border-b-[#404040] flex items-center justify-center"><svg class="w-[7px] h-1"><use href="#tri"/></svg></i></span>
          <span class="relative flex-1"><select aria-label="View" class="block appearance-none w-full h-5 pl-px bg-white border-2 border-[#808080] border-r-white border-b-white leading-3"><option>Local View</option></select><i class="pointer-events-none absolute right-0.5 top-0.5 size-4 bg-[#d4d0c8] border border-white border-r-[#404040] border-b-[#404040] flex items-center justify-center"><svg class="w-[7px] h-1"><use href="#tri"/></svg></i></span>
        </div>
        <div class="flex-1 min-h-0 bg-white border-t border-black">
          <div class="h-[17px] flex items-center pl-[5px] bg-[#d4d0c8]">
            <svg class="size-[9px]" viewBox="0 0 9 9"><path d="M.500.500h8v8h-8z" fill="#fff" stroke="#808080"/><path d="M2 4.500h5" stroke="#000"/></svg>
            <svg class="w-[17px] h-3.5 ml-[5px]"><use href="#gfolder"/></svg>
            <span class="pl-3">Site - try (H:\site\try)</span>
          </div>
          <div class="h-[17px] flex items-center pl-8">
            <svg class="w-3 h-[17px]" viewBox="0 0 12 17"><path d="M.500 0v17M0 9.500h12" fill="none" stroke="#808080" stroke-dasharray="1 1"/></svg>
            <svg class="w-3.5 h-4"><use href="#dwfile"/></svg>
            <span class="pl-[15px]">table.css</span>
          </div>
          <div class="h-[17px] flex items-center pl-8">
            <svg class="w-3 h-[17px]" viewBox="0 0 12 17"><path d="M.500 0v9.500h11" fill="none" stroke="#808080" stroke-dasharray="1 1"/></svg>
            <svg class="w-3.5 h-4"><use href="#dwfile"/></svg>
            <span class="pl-[15px]">table.htm</span>
          </div>
          <div class="h-[17px] flex items-center pl-[5px]">
            <svg class="size-[9px]" viewBox="0 0 9 9"><path d="M.500.500h8v8h-8z" fill="#fff" stroke="#808080"/><path d="M2 4.500h5M4.500 2v5" stroke="#000"/></svg>
            <svg class="w-[17px] h-4 ml-[5px]"><use href="#desk"/></svg>
            <span class="pl-3">Desktop</span>
          </div>
        </div>
        <div class="shrink-0 h-[17px] flex bg-[#ebe9e4] mr-0.5">
          <button aria-label="Scroll left" class="w-[15px] flex items-center justify-center bg-[#d4d0c8] border border-white border-r-[#404040] border-b-[#404040]"><svg class="w-1 h-[7px]" viewBox="0 0 4 7"><path d="M4 0v7L0 3.500z"/></svg></button>
          <span class="w-[74px] bg-[#d4d0c8] border border-white border-r-[#404040] border-b-[#404040]"></span>
          <button aria-label="Scroll right" class="ml-auto w-[15px] flex items-center justify-center bg-[#d4d0c8] border border-white border-r-[#404040] border-b-[#404040]"><svg class="w-1 h-[7px]" viewBox="0 0 4 7"><path d="M0 0v7l4-3.500z"/></svg></button>
        </div>
        <div class="shrink-0 h-[21px] border-t border-white"></div>
      </section>

      <section class="shrink-0 h-5 flex items-center pl-0.5 bg-[#808080] border-y border-black">
        <svg class="w-1.5 h-3.5"><use href="#grip"/></svg><svg class="w-[5px] h-2 ml-2"><use href="#right"/></svg>
        <h2 class="pl-1 text-xs text-white font-bold">Answers</h2>
      </section>
    </aside>
  </main>

  <!-- taskbar -->
  <footer class="shrink-0 h-[29px] pt-[3px] pb-0.5 flex items-center px-0.5 border-t border-white">
    <button class="w-[46px] h-[22px] flex items-center pl-px gap-0.5 border border-white border-r-[#404040] border-b-[#404040] text-xs whitespace-nowrap">
      <svg class="w-4 h-3.5" viewBox="0 0 16 14"><path d="M3 1q3-2 5 0L7 6Q5 4 2 6z" fill="#f05a28"/><path d="M9 2q3 1 6-1l-1 5q-3 2-6 0z" fill="#6bb82a"/><path d="M2 7q2-2 5 0l-1 5q-3-2-6 0z" fill="#2f78e0"/><path d="M8 7q3 2 6 0l-1 5q-3 2-6 0z" fill="#f8c420"/></svg>开始</button>
    <div class="w-[228px] flex items-center justify-between pl-2 pr-[17px]">
      <button aria-label="Internet Explorer"><svg class="size-[17px]"><use href="#ie"/></svg></button>
      <button aria-label="Show desktop"><svg class="w-3.5 h-4" viewBox="0 0 14 16"><path d="M1 1l10 1 2 12-11-1z" fill="#6ab8e8" stroke="#9ac8e0"/><path d="M3 3l6 1 1 6-7 1z" fill="#a8dcf8"/></svg></button>
      <button aria-label="Flash"><svg class="size-4" viewBox="0 0 16 16"><circle cx="8" cy="8" r="7.500" fill="#d01818" stroke="#700"/><path d="M12 3c-4 0-4 9-8 10M6 8h5" stroke="#200" stroke-width="2" fill="none"/></svg></button>
      <button aria-label="Dreamweaver"><svg class="size-4"><use href="#dw"/></svg></button>
      <button aria-label="Transfer"><svg class="size-4" viewBox="0 0 16 16"><path d="M1 1h5l3 3v10H1z" fill="#38a048" stroke="#000"/><path d="M4 3h5v9H4z" fill="#e8e8d0" stroke="#000"/><circle cx="8" cy="6" r="2.500" fill="#58b8d8" stroke="#000"/><path d="M5 10l11 2v3H7z" fill="#d01010" stroke="#204080"/></svg></button>
      <button aria-label="Globe"><svg class="size-3.5" viewBox="0 0 14 14"><circle cx="7" cy="7" r="6.500" fill="#1858c0"/><path d="M3 2l5-1 1 4-4 3-3-1zM9 8l4-1-2 5z" fill="#58c048"/></svg></button>
      <button aria-label="Outlook"><svg class="size-4"><use href="#desk"/></svg></button>
      <button aria-label="Tools"><svg class="size-4" viewBox="0 0 16 16"><path d="M7 3l5-2 4 2-1 7-5-2z" fill="#489060" stroke="#333"/><path d="M0 7l8-3 3 4-6 3z" fill="#888" stroke="#333"/><path d="M7 9l5 6M5 10l3 4" stroke="#a87848" stroke-width="2"/></svg></button>
      <button aria-label="Viewer"><svg class="size-4" viewBox="0 0 16 16"><path d="M1 1h13v14H1z" fill="#3860a8" stroke="#102050"/><path d="M3 3h5v10H3z" fill="#e8b080"/><path d="M4 8q5-9 11 0-5 8-11 0z" fill="#fff" stroke="#000"/><circle cx="10" cy="8" r="3" fill="#1a3a70"/></svg></button>
    </div>
    <div class="flex-1 min-w-0 flex gap-[3px]">
      <button class="flex-1 min-w-0 h-[22px] flex items-center gap-1 pl-[3px] border border-white border-r-[#404040] border-b-[#404040] whitespace-nowrap overflow-hidden"><svg class="shrink-0 size-4"><use href="#iefile"/></svg><span>5D<span class="text-xs">互动</span>...</span></button>
      <button class="flex-1 min-w-0 h-[22px] flex items-center gap-1 pl-[3px] border border-white border-r-[#404040] border-b-[#404040] whitespace-nowrap overflow-hidden"><svg class="shrink-0 w-4 h-3.5"><use href="#folder"/></svg><span class="text-xs">当的东西</span></button>
      <button class="flex-1 min-w-0 h-[22px] flex items-center gap-1 pl-[3px] border border-white border-r-[#404040] border-b-[#404040] whitespace-nowrap overflow-hidden"><svg class="shrink-0 size-4" viewBox="0 0 16 16"><circle cx="8" cy="8" r="6" fill="#fff" stroke="#3070d8" stroke-width="3"/><path d="M8 2a6 6 0 0 1 6 6" stroke="#60b030" stroke-width="3" fill="none"/><path d="M14 8a6 6 0 0 1-6 6" stroke="#f0b020" stroke-width="3" fill="none"/><path d="M2 8a6 6 0 0 1 6-6" stroke="#e85820" stroke-width="3" fill="none"/><path d="M6 5v6l5-3z"/></svg>Windows...</button>
      <button class="flex-1 min-w-0 h-[22px] flex items-center gap-1 pl-[3px] border border-white border-r-[#404040] border-b-[#404040] whitespace-nowrap overflow-hidden"><svg class="shrink-0 w-4 h-3.5"><use href="#folder"/></svg><span class="text-xs">摇滚歌曲</span></button>
      <button class="flex-1 min-w-0 h-[22px] flex items-center gap-1 pl-[3px] border border-white border-r-[#404040] border-b-[#404040] whitespace-nowrap overflow-hidden"><svg class="shrink-0 size-4"><use href="#iefile"/></svg>http://...</button>
      <button class="flex-1 min-w-0 h-[22px] flex items-center gap-1 pl-1 pt-px bg-[#ebe9e4] border border-[#404040] border-r-white border-b-white whitespace-nowrap overflow-hidden"><svg class="shrink-0 size-4"><use href="#dw"/></svg>Macrome...</button>
      <button class="flex-1 min-w-0 h-[22px] flex items-center gap-1 pl-[3px] border border-white border-r-[#404040] border-b-[#404040] whitespace-nowrap overflow-hidden"><svg class="shrink-0 w-4 h-3.5"><use href="#folder"/></svg>softbak</button>
    </div>
    <div class="w-[100px] h-[22px] ml-[7px] flex items-center pl-[3px] gap-1 border border-[#808080] border-r-white border-b-white">
      <svg class="w-4 h-3.5" viewBox="0 0 16 14"><path d="M1 10h14v3H1z" fill="#bbb" stroke="#333"/><path d="M2 11l2-9c5-2 5 5 0 5M8 11l2-9c5-2 5 5 0 5" fill="none" stroke="#000" stroke-width="3"/><path d="M2 11l2-9c5-2 5 5 0 5M8 11l2-9c5-2 5 5 0 5" fill="none" stroke="#f4f030" stroke-width="1.500"/></svg>
      <svg class="w-3 h-3.5" viewBox="0 0 12 14"><path d="M1 1q5 2 10 0v7q-1 4-5 5-4-1-5-5z" fill="#d01820" stroke="#000"/><path d="M6 3v7M3 6h6" stroke="#fff" stroke-width="2"/></svg>
      <svg class="size-4" viewBox="0 0 16 16"><circle cx="6" cy="6" r="5.500" fill="#777" stroke="#444"/><circle cx="7" cy="6" r="2.500" fill="#bbb"/><path d="M13 6q1 5-4 7M15 8q0 5-4 7" stroke="#99c" fill="none"/></svg>
      <time>21:03</time>
    </div>
  </footer>
</body>
</html>
